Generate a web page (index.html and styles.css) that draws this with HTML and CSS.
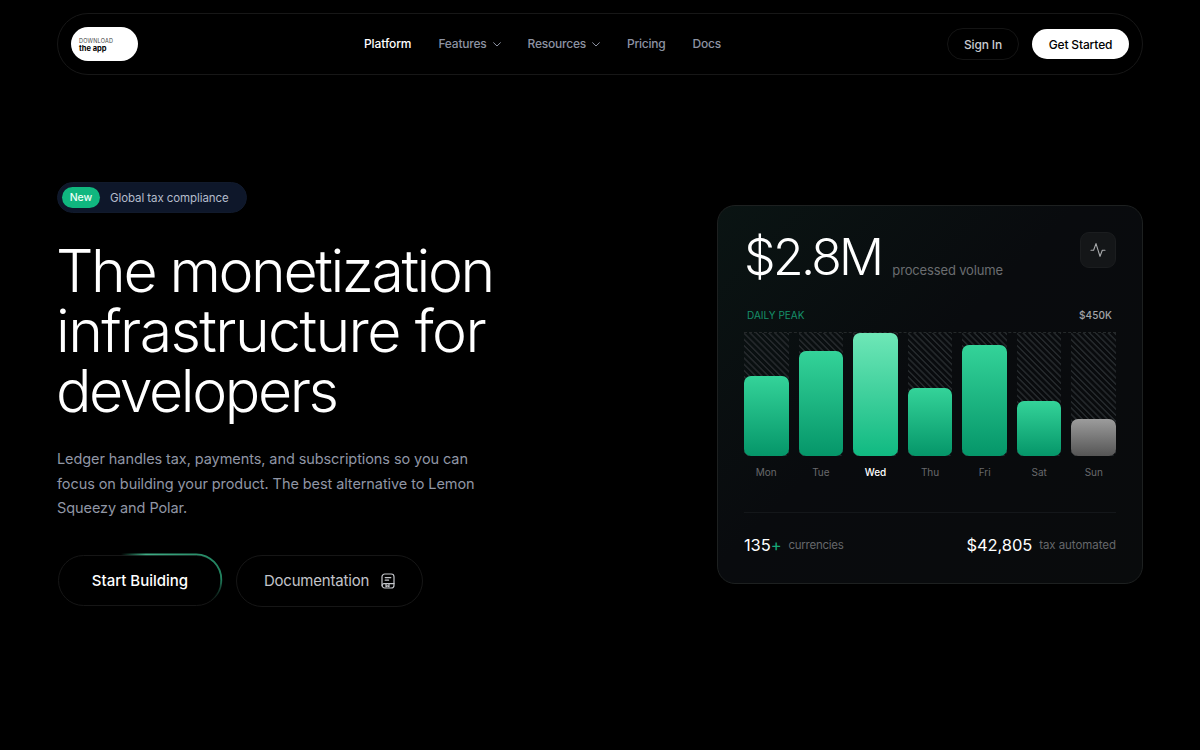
FILE: index.html
```html
<!DOCTYPE html>
<html lang="en">
<head>
    <meta charset="UTF-8">
    <meta name="viewport" content="width=device-width, initial-scale=1.0">
    <title>Ledger</title>
    <link rel="stylesheet" href="styles.css">
</head>
<body>
    <header class="navbar">
        <a class="app-badge" href="#">
            <span class="app-small">DOWNLOAD</span>
            <span class="app-big">the app</span>
        </a>
        <nav class="nav-links">
            <a class="active" href="#">Platform</a>
            <a class="has-menu" href="#"><span>Features</span>
                <svg class="chevron" viewBox="0 0 8 5"><path d="M0.6 0.7 L4 4 L7.4 0.7"/></svg>
            </a>
            <a class="has-menu" href="#"><span>Resources</span>
                <svg class="chevron" viewBox="0 0 8 5"><path d="M0.6 0.7 L4 4 L7.4 0.7"/></svg>
            </a>
            <a href="#">Pricing</a>
            <a href="#">Docs</a>
        </nav>
        <div class="nav-actions">
            <a class="sign-in" href="#">Sign In</a>
            <a class="get-started" href="#">Get Started</a>
        </div>
    </header>

    <main class="hero">
        <section class="intro">
            <a class="announcement" href="#">
                <span class="tag">New</span>
                <span class="announcement-text">Global tax compliance</span>
            </a>
            <h1>
                The monetization<br>
                <span class="wide">infrastructure for</span><br>
                developers
            </h1>
            <p>Ledger handles tax, payments, and subscriptions so you can<br>focus on building your product. The best alternative to Lemon<br>Squeezy and Polar.</p>
            <div class="buttons">
                <a class="btn btn-start" href="#">
                    <span>Start Building</span>
                    <svg class="glow" viewBox="0 0 166 54">
                        <defs>
                            <linearGradient id="glow-top" x1="64" y1="0" x2="164" y2="0" gradientUnits="userSpaceOnUse">
                                <stop offset="0" stop-color="#34b98a" stop-opacity="0"/>
                                <stop offset="0.25" stop-color="#3fae86"/>
                                <stop offset="1" stop-color="#21825f"/>
                            </linearGradient>
                            <linearGradient id="glow-side" x1="0" y1="26" x2="0" y2="49" gradientUnits="userSpaceOnUse">
                                <stop offset="0" stop-color="#21825f"/>
                                <stop offset="1" stop-color="#0b3a2a" stop-opacity="0"/>
                            </linearGradient>
                        </defs>
                        <path stroke="url(#glow-top)" d="M64 1.3 H139.2 A25.3 25.3 0 0 1 164.3 27"/>
                        <path stroke="url(#glow-side)" d="M164.3 27 A25.3 25.3 0 0 1 152 49"/>
                    </svg>
                </a>
                <a class="btn btn-docs" href="#">
                    <span>Documentation</span>
                    <svg class="doc-icon" viewBox="0 0 14 16">
                        <rect x="1" y="1" width="12" height="14" rx="2.8"/>
                        <path d="M4.2 4.6h5.6M4.2 7.2h3.4M1.2 12.4a1.8 1.8 0 0 1 1.8-1.8h10M5 10.8v3l1.5-1 1.5 1v-3"/>
                    </svg>
                </a>
            </div>
        </section>

        <section class="card">
            <div class="card-head">
                <div class="volume">
                    <span class="amount">$2.8M</span>
                    <span class="caption">processed volume</span>
                </div>
                <div class="pulse">
                    <svg viewBox="0 0 16 16"><path d="M1 8.3h2.6L6 1.6l4 12.8 2.3-6.1H15"/></svg>
                </div>
            </div>
            <div class="peak">
                <span class="peak-label">DAILY PEAK</span>
                <span class="peak-value">$450K</span>
            </div>
            <div class="chart">
                <div class="track"><div class="bar" style="height: 65%"></div></div>
                <div class="track"><div class="bar" style="height: 85%"></div></div>
                <div class="track"><div class="bar bar-top" style="height: 100%"></div></div>
                <div class="track"><div class="bar" style="height: 55%"></div></div>
                <div class="track"><div class="bar" style="height: 90%"></div></div>
                <div class="track"><div class="bar" style="height: 45%"></div></div>
                <div class="track"><div class="bar bar-off" style="height: 30%"></div></div>
            </div>
            <div class="days">
                <span>Mon</span>
                <span>Tue</span>
                <span class="today">Wed</span>
                <span>Thu</span>
                <span>Fri</span>
                <span>Sat</span>
                <span>Sun</span>
            </div>
            <div class="stats">
                <div class="stat">
                    <span class="number">135<span class="plus">+</span></span>
                    <span class="label label-currencies">currencies</span>
                </div>
                <div class="stat">
                    <span class="number">$42,805</span>
                    <span class="label">tax automated</span>
                </div>
            </div>
        </section>
    </main>
</body>
</html>
```
FILE: styles.css
```css
* {
    box-sizing: border-box;
}
body {
    margin: 0;
    padding: 13px 57px 0;
    height: 750px;
    overflow: hidden;
    background: #000;
    color: #fff;
    font-family: Inter, "Liberation Sans", sans-serif;
}
a {
    color: inherit;
    text-decoration: none;
}
svg {
    display: block;
    fill: none;
    stroke: currentColor;
    stroke-linecap: round;
    stroke-linejoin: round;
}

/* navbar */
.navbar {
    display: flex;
    align-items: center;
    justify-content: space-between;
    height: 62px;
    padding: 0 13px;
    border: 1px solid #171717;
    border-radius: 31px;
}
.app-badge {
    display: flex;
    flex-direction: column;
    justify-content: center;
    width: 67px;
    height: 34px;
    padding: 2px 0 0 8px;
    border-radius: 17px;
    background: #fff;
    color: #000;
}
.app-small {
    font-size: 5.5px;
    line-height: 7px;
    letter-spacing: 0.2px;
    color: #444;
}
.app-big {
    font-size: 7.5px;
    line-height: 8px;
    font-weight: 700;
}
.nav-links {
    display: flex;
    align-items: center;
    gap: 27px;
    font-size: 12px;
    line-height: 16px;
    font-weight: 500;
    letter-spacing: -0.22px;
    color: #8d93a3;
}
.nav-links .active {
    color: #fff;
    letter-spacing: -0.1px;
}
.has-menu {
    display: flex;
    align-items: center;
    gap: 6px;
}
.chevron {
    width: 8px;
    height: 5px;
}
.nav-actions {
    display: flex;
    align-items: center;
    gap: 13px;
    font-size: 12px;
    font-weight: 500;
    letter-spacing: -0.15px;
}
.sign-in,
.get-started {
    display: flex;
    align-items: center;
    justify-content: center;
    border-radius: 16px;
}
.sign-in {
    width: 72px;
    height: 32px;
    border: 1px solid #141414;
    color: #c9cbd0;
}
.get-started {
    width: 97px;
    height: 30px;
    background: #fff;
    color: #000;
}

/* hero */
.hero {
    display: flex;
    justify-content: space-between;
    align-items: flex-start;
}
.intro {
    padding-top: 107px;
}
.announcement {
    display: flex;
    align-items: center;
    width: 190px;
    height: 31px;
    padding-left: 4px;
    gap: 10px;
    border: 1px solid #111a2c;
    border-radius: 16px;
    background: #0e172a;
    color: #b4bccb;
}
.announcement-text {
    font-size: 11.5px;
    letter-spacing: -0.08px;
}
.tag {
    display: flex;
    align-items: center;
    justify-content: center;
    width: 38px;
    height: 21px;
    border-radius: 11px;
    background: #10b77f;
    font-size: 10.5px;
    font-weight: 500;
    color: #e9fff6;
}
h1 {
    margin: 28px 0 0 -1px;
    font-size: 59px;
    line-height: 60px;
    font-weight: 300;
    letter-spacing: -2.4px;
    white-space: nowrap;
}
h1 .wide {
    letter-spacing: -1.6px;
}
.intro p {
    margin: 26px 0 0;
    font-size: 14.5px;
    line-height: 24.5px;
    letter-spacing: -0.08px;
    color: #9096a5;
    white-space: nowrap;
}
.buttons {
    display: flex;
    gap: 14px;
    margin: 34px 0 0 1px;
}
.btn {
    display: flex;
    align-items: center;
    justify-content: center;
    height: 51px;
    border: 1px solid #161616;
    border-radius: 26px;
    font-size: 15px;
}
.btn-start {
    position: relative;
    width: 164px;
    font-weight: 500;
}
.glow {
    position: absolute;
    left: -2px;
    top: -3px;
    width: 166px;
    height: 54px;
    stroke-width: 1.8;
    stroke-linecap: butt;
}
.btn-docs {
    width: 187px;
    height: 52px;
    gap: 12px;
    letter-spacing: -0.2px;
    color: #c3c5ca;
}
.doc-icon {
    width: 14px;
    height: 16px;
    stroke-width: 1.2;
}

/* volume card */
.card {
    width: 426px;
    height: 379px;
    margin-top: 130px;
    padding: 26px 26px 0;
    border: 1px solid #1d2020;
    border-radius: 18px;
    background: linear-gradient(135deg, #0a1413 0%, #090b0e 45%, #090b0c 100%);
}
.card-head {
    display: flex;
    justify-content: space-between;
    align-items: flex-start;
}
.volume {
    display: flex;
    align-items: baseline;
    gap: 11px;
    height: 72px;
}
.amount {
    font-size: 50px;
    line-height: 50px;
    font-weight: 300;
    letter-spacing: -2.7px;
}
.caption {
    font-size: 13px;
    letter-spacing: -0.15px;
    color: #6b6d70;
}
.pulse {
    display: flex;
    align-items: center;
    justify-content: center;
    width: 36px;
    height: 36px;
    border: 1px solid #1b1d1f;
    border-radius: 9px;
    background: #141618;
    color: #a9abad;
}
.pulse svg {
    width: 16px;
    height: 16px;
    stroke-width: 1.1;
}
.peak {
    display: flex;
    justify-content: space-between;
    padding: 4px 4px 0 3px;
    height: 28px;
    font-size: 10px;
    line-height: 14px;
}
.peak-label {
    color: #16906a;
}
.peak-value {
    color: #a3a5a8;
    font-weight: 500;
    letter-spacing: 0.1px;
}
.chart {
    display: flex;
    gap: 10px;
    height: 124px;
    border-top: 1px dashed #25292a;
}
.track {
    display: flex;
    flex: 1;
    align-items: flex-end;
    background: repeating-linear-gradient(45deg, transparent 0 2.2px, #23272a 2.8px 3.8px, transparent 4.4px);
}
.bar {
    width: 100%;
    border-radius: 7px;
    background: linear-gradient(180deg, #34d399, #059669);
}
.bar-top {
    background: linear-gradient(180deg, #6ee7b7, #10b981);
}
.bar-off {
    background: linear-gradient(180deg, #9c9c9c, #555);
}
.days {
    display: flex;
    gap: 10px;
    height: 57px;
    padding-top: 9px;
    border-bottom: 1px solid #14171a;
    font-size: 10px;
    line-height: 14px;
    color: #68696c;
}
.days span {
    flex: 1;
    text-align: center;
}
.days .today {
    color: #fff;
    font-weight: 500;
}
.stats {
    display: flex;
    justify-content: space-between;
    padding-top: 21px;
}
.stat {
    display: flex;
    align-items: center;
    gap: 7px;
}
.number {
    font-size: 16.5px;
    line-height: 22px;
    letter-spacing: -0.1px;
}
.plus {
    color: #17a877;
}
.label {
    font-size: 11.5px;
    letter-spacing: -0.05px;
    color: #65676a;
}
.label-currencies {
    letter-spacing: -0.25px;
}
```
